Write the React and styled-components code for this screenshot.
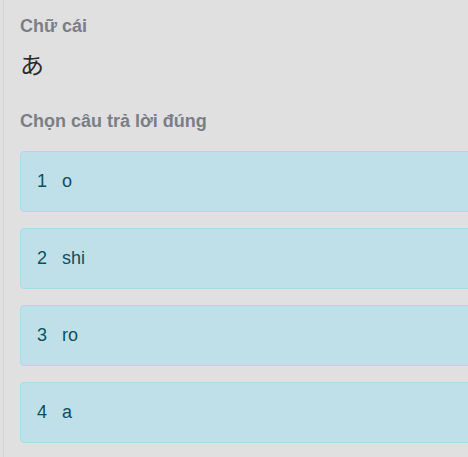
import styled, { createGlobalStyle } from "styled-components"

const GlobalStyle = createGlobalStyle`
    html, body {
        margin: 0;
        padding: 0;
        background: #e0e0e0;
        font-family: "Liberation Sans", Arial, sans-serif;
    }
    body {
        overflow: hidden;
    }
`

const Pagina = styled.div`
    width: 100%;
    min-height: 457px;
    box-sizing: border-box;
    padding-left: 3px;
    overflow: hidden;
`

const Panel = styled.section`
    border-left: 1px solid #d4d4d4;
    min-height: 457px;
    padding: 16px 0 0 16px;
    box-sizing: border-box;
`

const Titulo = styled.h4`
    margin: 0;
    font-size: 18px;
    line-height: 21px;
    font-weight: bold;
    color: #7a7e86;
`

const Letra = styled.div`
    margin: 13px 0 0;
    font-size: 24px;
    line-height: 28px;
    color: #2c2c2c;
    font-family: "Noto Sans CJK JP", "Liberation Sans", sans-serif;
`

const Pregunta = styled(Titulo)`
    margin-top: 33px;
`

const Opciones = styled.ol`
    list-style: none;
    margin: 19px 0 0;
    padding: 0;
    display: flex;
    flex-direction: column;
    gap: 16px;
    width: 520px;
`

const Opcion = styled.li`
    display: flex;
    align-items: center;
    height: 61px;
    box-sizing: border-box;
    padding-left: 16px;
    background: #bfe0e8;
    border: 1px solid #aadbe9;
    border-radius: 4px;
    color: #0e4f5e;
    font-size: 18px;
`

const Numero = styled.span`
    width: 25px;
`

const opciones = ["o", "shi", "ro", "a"]

export default function App() {
    return (
        <>
            <GlobalStyle />
            <Pagina>
                <Panel>
                    <Titulo>Chữ cái</Titulo>
                    <Letra>あ</Letra>
                    <Pregunta>Chọn câu trả lời đúng</Pregunta>
                    <Opciones>
                        {opciones.map((texto, i) => (
                            <Opcion key={texto}>
                                <Numero>{i + 1}</Numero>
                                <span>{texto}</span>
                            </Opcion>
                        ))}
                    </Opciones>
                </Panel>
            </Pagina>
        </>
    )
}
